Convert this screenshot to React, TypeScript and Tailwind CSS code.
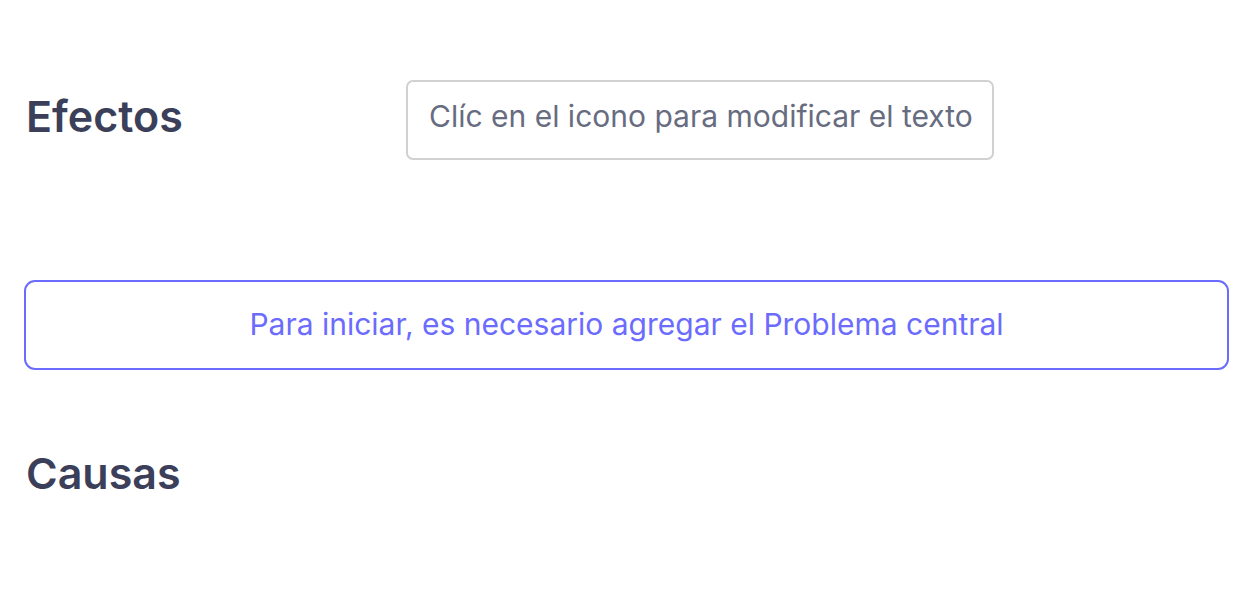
import React from "react";

export default function App() {
  return (
    <div
      className="w-[1256px] h-[604px] bg-white overflow-hidden"
      style={{ fontFamily: "Inter, 'Noto Sans', sans-serif" }}
    >
      <div className="pl-6 pr-[27px]">
        <div className="flex items-start pt-[80px] h-[160px]">
          <h2 className="w-[382px] pl-[2px] pt-[15px] text-[43px] font-semibold text-[#3b3f5a] leading-none">
            Efectos
          </h2>
          <div className="w-[588px] h-[80px] border-2 border-[#d1d1d1] rounded-[7px] flex items-center pl-[21px] text-[30px] text-[#686c80] leading-none pb-[8px]">
            Clíc en el icono para modificar el texto
          </div>
        </div>
        <div className="mt-[120px] h-[90px] border-2 border-[#6b6bfe] rounded-[11px] flex items-center justify-center text-[30px] text-[#6b6bfe] leading-none pb-[2px]">
          Para iniciar, es necesario agregar el Problema central
        </div>
        <h2 className="mt-[82px] pl-[2px] text-[43px] font-semibold text-[#3b3f5a] leading-none">
          Causas
        </h2>
      </div>
    </div>
  );
}
